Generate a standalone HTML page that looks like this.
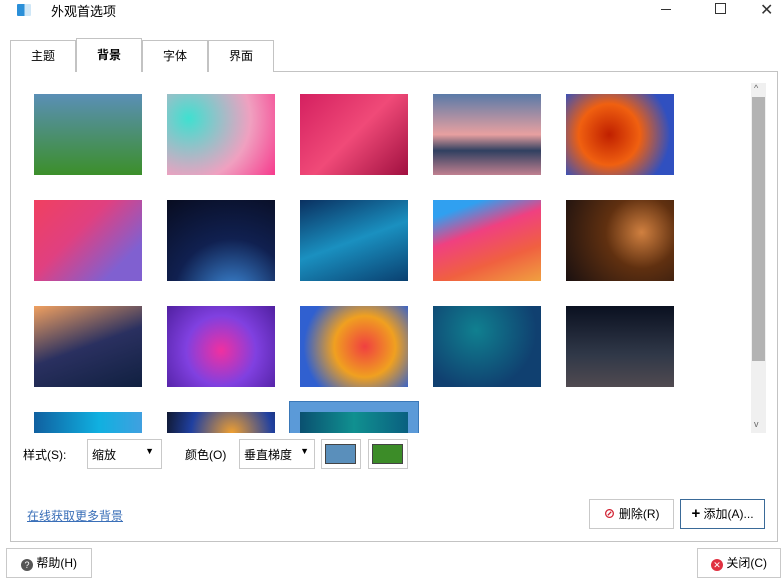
<!DOCTYPE html>
<html><head><meta charset="utf-8"><style>
*{margin:0;padding:0;box-sizing:border-box}
body{width:784px;height:580px;background:#fff;font-family:"Liberation Sans","Noto Sans CJK SC",sans-serif;font-size:12px;color:#000;position:relative;overflow:hidden}
.a{position:absolute}
.tab{position:absolute;top:40px;height:32px;border:1px solid #c3c3c3;border-bottom:none;background:#fff;text-align:center;line-height:31px;font-size:12px}
.t{position:absolute;width:108px;height:81px}
.btn{position:absolute;border:1px solid #c9c9c9;background:#fff;font-size:12px;text-align:center}
</style></head><body>
<div class="a" style="left:17px;top:4px;width:14px;height:12px;background:linear-gradient(90deg,#2a8fd8 55%,#cfe7f7 55%);border-radius:1px"></div>
<div class="a" style="left:51px;top:1px;font-size:13px">外观首选项</div>
<div class="a" style="left:661px;top:9px;width:10px;height:1px;background:#333"></div>
<div class="a" style="left:715px;top:3px;width:11px;height:11px;border:1px solid #333"></div>
<div class="a" style="left:760px;top:0px;font-size:16px;color:#333">✕</div>

<div class="a" style="left:10px;top:71px;width:768px;height:471px;border:1px solid #c3c3c3"></div>
<div class="tab" style="left:10px;width:66px">主题</div>
<div class="tab" style="left:76px;top:38px;height:34px;width:66px;font-weight:bold;line-height:33px">背景</div>
<div class="tab" style="left:142px;width:66px">字体</div>
<div class="tab" style="left:208px;width:66px">界面</div>
<div class="a" style="left:77px;top:71px;width:64px;height:2px;background:#fff"></div>

<div class="a" style="left:751px;top:83px;width:15px;height:350px;background:#f0f0f0"></div>
<div class="a" style="left:752px;top:97px;width:13px;height:264px;background:#b3b3b3"></div>
<div class="a" style="left:754px;top:83px;font-size:9px;color:#666">^</div>
<div class="a" style="left:754px;top:419px;font-size:9px;color:#666">v</div>

<div class="t" style="left:34px;top:94px;background:linear-gradient(#5a8fb6,#3c8f2a)"></div>
<div class="t" style="left:167px;top:94px;background:radial-gradient(circle at 20% 30%,#3fe0d0,#f0a0c0 60%,#f63a8c)"></div>
<div class="t" style="left:300px;top:94px;background:linear-gradient(135deg,#d42060,#f04a78 50%,#a01040)"></div>
<div class="t" style="left:433px;top:94px;background:linear-gradient(#5a7aa8,#e8a0a0 50%,#304060 70%,#c08090)"></div>
<div class="t" style="left:566px;top:94px;background:radial-gradient(circle at 40% 50%,#c02000,#f06010 40%,#3050c0 80%)"></div>

<div class="t" style="left:34px;top:200px;background:linear-gradient(135deg,#f04060,#e04080 40%,#8060d0 80%)"></div>
<div class="t" style="left:167px;top:200px;background:radial-gradient(circle at 60% 120%,#4090e0,#102050 50%,#080c20)"></div>
<div class="t" style="left:300px;top:200px;background:linear-gradient(160deg,#0a3060,#1a90c0 50%,#0a4070)"></div>
<div class="t" style="left:433px;top:200px;background:linear-gradient(160deg,#30a0f0 15%,#f04080 40%,#f06040 70%,#f0a040)"></div>
<div class="t" style="left:566px;top:200px;background:radial-gradient(circle at 70% 40%,#d08040,#603010 40%,#1a1010)"></div>

<div class="t" style="left:34px;top:306px;background:linear-gradient(160deg,#f0a060,#2a3060 50%,#102040)"></div>
<div class="t" style="left:167px;top:306px;background:radial-gradient(circle at 50% 55%,#f030a0,#8040e0 50%,#5020a0)"></div>
<div class="t" style="left:300px;top:306px;background:radial-gradient(circle at 60% 50%,#f04040,#f0a020 40%,#3060d0 80%)"></div>
<div class="t" style="left:433px;top:306px;background:radial-gradient(circle at 40% 30%,#108090,#104070 70%)"></div>
<div class="t" style="left:566px;top:306px;background:linear-gradient(#0a1020,#303848 60%,#504a50)"></div>

<div class="a" style="left:289px;top:401px;width:130px;height:32px;background:#5b9ad8;border:1px solid #3a78b8;border-bottom:none"></div>
<div class="t" style="left:34px;top:412px;height:21px;background:linear-gradient(90deg,#1060a0,#10b0e0 60%,#40a0e0)"></div>
<div class="t" style="left:167px;top:412px;height:21px;background:radial-gradient(circle at 60% 100%,#f0a030,#2040a0 60%,#101830)"></div>
<div class="t" style="left:300px;top:412px;height:21px;background:linear-gradient(90deg,#0a5070,#109090 50%,#0a6080)"></div>
<div class="a" style="left:20px;top:433px;width:730px;height:100px;background:#fff"></div>

<div class="a" style="left:23px;top:446px">样式(S):</div>
<div class="btn" style="left:87px;top:439px;width:75px;height:30px;text-align:left;padding:6px 0 0 4px">缩放<span style="position:absolute;right:7px;top:6px;font-size:9px">▼</span></div>
<div class="a" style="left:185px;top:446px">颜色(O)</div>
<div class="btn" style="left:239px;top:439px;width:76px;height:30px;text-align:left;padding:6px 0 0 4px">垂直梯度<span style="position:absolute;right:5px;top:6px;font-size:9px">▼</span></div>
<div class="btn" style="left:321px;top:439px;width:40px;height:30px"><div class="a" style="left:3px;top:4px;width:31px;height:20px;background:#5a8fbb;border:1px solid #444"></div></div>
<div class="btn" style="left:368px;top:439px;width:40px;height:30px"><div class="a" style="left:3px;top:4px;width:31px;height:20px;background:#3c8c28;border:1px solid #444"></div></div>

<div class="a" style="left:27px;top:507px;color:#3a6fb8;text-decoration:underline">在线获取更多背景</div>
<div class="btn" style="left:589px;top:499px;width:85px;height:30px;line-height:28px"><span style="color:#d02030;font-weight:bold">⊘</span> 删除(R)</div>
<div class="btn" style="left:680px;top:499px;width:85px;height:30px;line-height:28px;border-color:#3a6a98"><b style="font-size:15px">+</b> 添加(A)...</div>

<div class="btn" style="left:6px;top:548px;width:86px;height:30px;line-height:28px"><span style="display:inline-block;width:12px;height:12px;border-radius:50%;background:#555;color:#fff;font-size:9px;line-height:12px;vertical-align:-1px">?</span> 帮助(H)</div>
<div class="btn" style="left:697px;top:548px;width:84px;height:30px;line-height:28px"><span style="display:inline-block;width:12px;height:12px;border-radius:50%;background:#e03040;color:#fff;font-size:9px;line-height:12px;vertical-align:-1px">✕</span> 关闭(C)</div>
</body></html>
